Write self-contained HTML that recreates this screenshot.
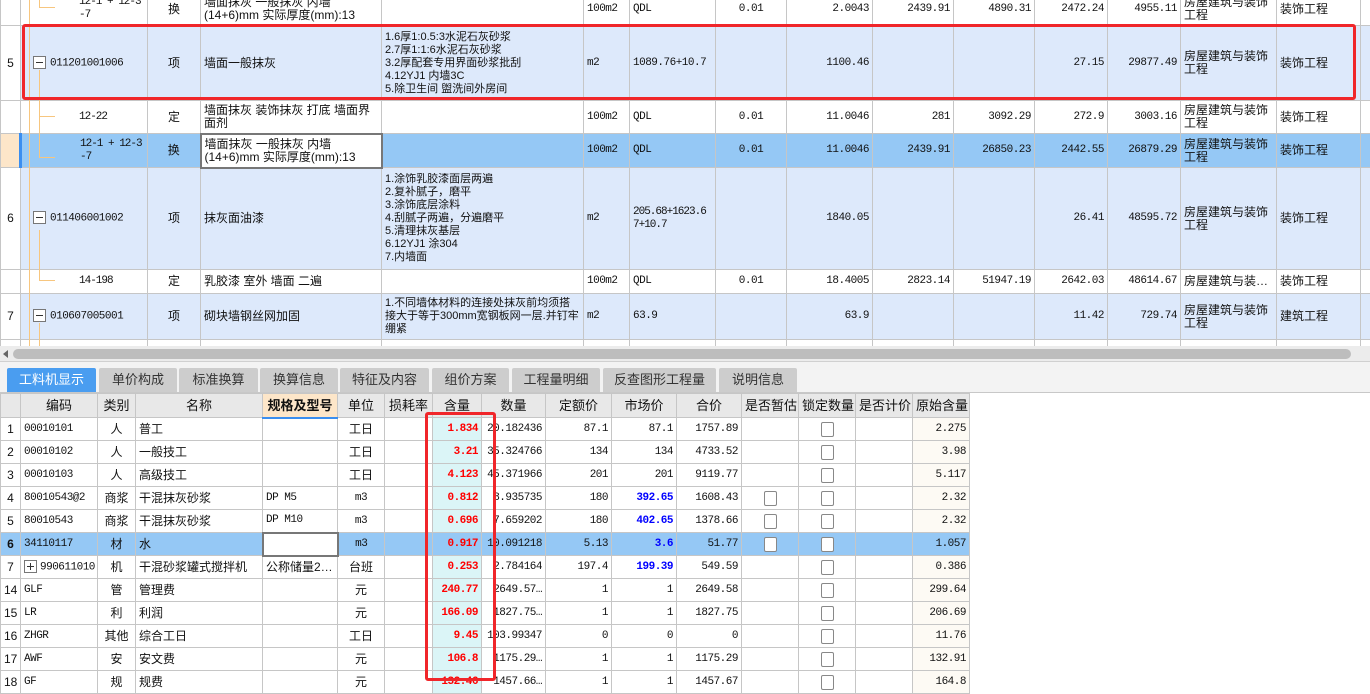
<!DOCTYPE html>
<html><head><meta charset="utf-8"><style>
*{margin:0;padding:0;box-sizing:border-box}
body{width:1370px;height:683px;overflow:hidden;background:#fff;font-family:"Liberation Sans","Noto Sans CJK SC",sans-serif;font-size:12px;color:#111;position:relative}
table{border-collapse:collapse;table-layout:fixed;position:absolute}
td{border:1px solid #c6c6c6;padding:0 3px;overflow:hidden;white-space:nowrap;line-height:13px;vertical-align:middle}
.w{white-space:normal;word-break:break-all}
.m{overflow:hidden;line-height:13px}
.r{text-align:right}.c{text-align:center}
.b{background:#dde9fb}.s{background:#95c8f5}
.num{font-family:"Liberation Mono","Noto Sans CJK SC",monospace;font-size:11px;letter-spacing:-0.5px}
.tc{font-family:"Liberation Mono",monospace;font-size:11px;letter-spacing:-1px;padding-left:58px!important}
.d{font-size:11px}
.tree{position:absolute;background:#f7c67f}
.box{display:inline-block;width:13px;height:13px;border:1px solid #777;background:#fff;vertical-align:middle;position:relative;margin-right:4px}
.box:after{content:"";position:absolute;left:2px;right:2px;top:5px;height:1px;background:#333}
.plus:before{content:"";position:absolute;top:2px;bottom:2px;left:5px;width:1px;background:#333}
.tab{position:absolute;top:368px;height:24px;background:#cdcdcd;color:#333;font-size:13px;text-align:center;line-height:24px;border-radius:2px 2px 0 0}
#bot td{height:23px}
#bot tr.h td{background:#e8e8e8;text-align:center;font-size:13px;height:24px}
.cy{background:#dbf5f7;color:#f00;font-weight:bold;text-align:right}
.og{background:#fdfaf4;text-align:right}
.blue{color:#00f;font-weight:bold}
.cb{display:inline-block;width:13px;height:15px;border:1px solid #888;border-radius:2px;background:#fff;vertical-align:middle}
</style></head><body>

<table id="top" style="left:0;top:-8px;width:1380px">
<colgroup><col style="width:20px"><col style="width:127px"><col style="width:53px"><col style="width:181px"><col style="width:202px"><col style="width:46px"><col style="width:86px"><col style="width:71px"><col style="width:86px"><col style="width:81px"><col style="width:81px"><col style="width:73px"><col style="width:73px"><col style="width:96px"><col style="width:84px"><col style="width:20px"></colgroup>
<tr style="height:33px"><td></td><td class="tc"><div class="m" style="max-height:31px">12-1 + 12-3 *<br>-7</div></td><td class="c">换</td><td><div class="m" style="max-height:31px">墙面抹灰 一般抹灰 内墙<br>(14+6)mm 实际厚度(mm):13</div></td><td></td><td class="num">100m2</td><td class="num">QDL</td><td class="c num">0.01</td><td class="r num">2.0043</td><td class="r num">2439.91</td><td class="r num">4890.31</td><td class="r num">2472.24</td><td class="r num">4955.11</td><td class="w"><div class="m" style="max-height:31px">房屋建筑与装饰工程</div></td><td>装饰工程</td><td></td></tr>
<tr style="height:75px" class="b"><td class="c" style="background:#fff">5</td><td style="padding-left:12px" class="num"><span class="box"></span>011201001006</td><td class="c">项</td><td>墙面一般抹灰</td><td class="d"><div class="m" style="max-height:73px">1.6厚1:0.5:3水泥石灰砂浆<br>2.7厚1:1:6水泥石灰砂浆<br>3.2厚配套专用界面砂浆批刮<br>4.12YJ1 内墙3C<br>5.除卫生间 盥洗间外房间</div></td><td class="num">m2</td><td class="num">1089.76+10.7</td><td></td><td class="r num">1100.46</td><td></td><td></td><td class="r num">27.15</td><td class="r num">29877.49</td><td class="w"><div class="m" style="max-height:31px">房屋建筑与装饰工程</div></td><td>装饰工程</td><td></td></tr>
<tr style="height:33px"><td></td><td class="tc">12-22</td><td class="c">定</td><td class="w"><div class="m" style="max-height:31px">墙面抹灰 装饰抹灰 打底 墙面界面剂</div></td><td></td><td class="num">100m2</td><td class="num">QDL</td><td class="c num">0.01</td><td class="r num">11.0046</td><td class="r num">281</td><td class="r num">3092.29</td><td class="r num">272.9</td><td class="r num">3003.16</td><td class="w"><div class="m" style="max-height:31px">房屋建筑与装饰工程</div></td><td>装饰工程</td><td></td></tr>
<tr style="height:34px" class="s"><td style="background:#fde6c9;border-right:3px solid #3a8ef0"></td><td class="tc"><div class="m" style="max-height:31px">12-1 + 12-3 *<br>-7</div></td><td class="c">换</td><td style="background:#fff;border:2px solid #777"><div class="m" style="max-height:29px">墙面抹灰 一般抹灰 内墙<br>(14+6)mm 实际厚度(mm):13</div></td><td></td><td class="num">100m2</td><td class="num">QDL</td><td class="c num">0.01</td><td class="r num">11.0046</td><td class="r num">2439.91</td><td class="r num">26850.23</td><td class="r num">2442.55</td><td class="r num">26879.29</td><td class="w"><div class="m" style="max-height:31px">房屋建筑与装饰工程</div></td><td>装饰工程</td><td></td></tr>
<tr style="height:102px" class="b"><td class="c" style="background:#fff">6</td><td style="padding-left:12px" class="num"><span class="box"></span>011406001002</td><td class="c">项</td><td>抹灰面油漆</td><td class="d"><div class="m" style="max-height:100px">1.涂饰乳胶漆面层两遍<br>2.复补腻子，磨平<br>3.涂饰底层涂料<br>4.刮腻子两遍，分遍磨平<br>5.清理抹灰基层<br>6.12YJ1 涂304<br>7.内墙面</div></td><td class="num">m2</td><td class="num" style="letter-spacing:-1px"><div class="m" style="max-height:30px">205.68+1623.6<br>7+10.7</div></td><td></td><td class="r num">1840.05</td><td></td><td></td><td class="r num">26.41</td><td class="r num">48595.72</td><td class="w"><div class="m" style="max-height:31px">房屋建筑与装饰工程</div></td><td>装饰工程</td><td></td></tr>
<tr style="height:24px"><td></td><td class="tc">14-198</td><td class="c">定</td><td>乳胶漆 室外 墙面 二遍</td><td></td><td class="num">100m2</td><td class="num">QDL</td><td class="c num">0.01</td><td class="r num">18.4005</td><td class="r num">2823.14</td><td class="r num">51947.19</td><td class="r num">2642.03</td><td class="r num">48614.67</td><td>房屋建筑与装…</td><td>装饰工程</td><td></td></tr>
<tr style="height:46px" class="b"><td class="c" style="background:#fff">7</td><td style="padding-left:12px" class="num"><span class="box"></span>010607005001</td><td class="c">项</td><td>砌块墙钢丝网加固</td><td class="w d"><div class="m" style="max-height:44px">1.不同墙体材料的连接处抹灰前均须搭接大于等于300mm宽钢板网一层.并钉牢绷紧</div></td><td class="num">m2</td><td class="num">63.9</td><td></td><td class="r num">63.9</td><td></td><td></td><td class="r num">11.42</td><td class="r num">729.74</td><td class="w"><div class="m" style="max-height:31px">房屋建筑与装饰工程</div></td><td>建筑工程</td><td></td></tr>
<tr style="height:20px"><td></td><td></td><td></td><td></td><td></td><td></td><td></td><td></td><td></td><td></td><td></td><td></td><td></td><td></td><td></td><td></td></tr>
</table>
<div class="tree" style="left:29px;top:0;width:1px;height:346px"></div>
<div class="tree" style="left:39px;top:0;width:1px;height:8px"></div>
<div class="tree" style="left:39px;top:7px;width:16px;height:1px"></div>
<div class="tree" style="left:39px;top:70px;width:1px;height:88px"></div>
<div class="tree" style="left:39px;top:116px;width:16px;height:1px"></div>
<div class="tree" style="left:39px;top:157px;width:16px;height:1px"></div>
<div class="tree" style="left:39px;top:230px;width:1px;height:51px"></div>
<div class="tree" style="left:39px;top:280px;width:16px;height:1px"></div>
<div class="tree" style="left:39px;top:323px;width:1px;height:23px"></div>
<div style="position:absolute;left:22px;top:24px;width:1334px;height:76px;border:3px solid #f0262a;border-radius:3px"></div>

<div style="position:absolute;left:0;top:346px;width:1370px;height:16px;background:#ececec;border-bottom:1px solid #d0d0d0"></div>
<div style="position:absolute;left:3px;top:350px;width:0;height:0;border-top:4px solid transparent;border-bottom:4px solid transparent;border-right:5px solid #666"></div>
<div style="position:absolute;left:13px;top:349px;width:1338px;height:10px;background:#bdbdbd;border-radius:5px"></div>
<div style="position:absolute;left:0;top:362px;width:1370px;height:31px;background:#f3f3f3;border-bottom:1px solid #c8c8c8"></div>

<div class="tab" style="left:7px;width:89px;background:#4a9df0;color:#fff">工料机显示</div>
<div class="tab" style="left:99px;width:78px">单价构成</div>
<div class="tab" style="left:179px;width:79px">标准换算</div>
<div class="tab" style="left:260px;width:78px">换算信息</div>
<div class="tab" style="left:340px;width:89px">特征及内容</div>
<div class="tab" style="left:432px;width:77px">组价方案</div>
<div class="tab" style="left:512px;width:88px">工程量明细</div>
<div class="tab" style="left:603px;width:113px">反查图形工程量</div>
<div class="tab" style="left:719px;width:78px">说明信息</div>

<table id="bot" style="left:0;top:393px;width:969px">
<colgroup><col style="width:20px"><col style="width:77px"><col style="width:38px"><col style="width:127px"><col style="width:75px"><col style="width:47px"><col style="width:48px"><col style="width:49px"><col style="width:64px"><col style="width:66px"><col style="width:65px"><col style="width:65px"><col style="width:57px"><col style="width:57px"><col style="width:57px"><col style="width:57px"></colgroup>
<tr class="h"><td></td><td>编码</td><td>类别</td><td>名称</td><td style="background:#fde6c9;font-weight:bold;border-bottom:2px solid #3a8ef0">规格及型号</td><td>单位</td><td>损耗率</td><td>含量</td><td>数量</td><td>定额价</td><td>市场价</td><td>合价</td><td>是否暂估</td><td>锁定数量</td><td>是否计价</td><td>原始含量</td></tr>
<tr><td class="c">1</td><td class="num">00010101</td><td class="c">人</td><td>普工</td><td></td><td class="c">工日</td><td></td><td class="cy num">1.834</td><td class="r num">20.182436</td><td class="r num">87.1</td><td class="r num">87.1</td><td class="r num">1757.89</td><td></td><td class="c"><span class="cb"></span></td><td></td><td class="og num">2.275</td></tr>
<tr><td class="c">2</td><td class="num">00010102</td><td class="c">人</td><td>一般技工</td><td></td><td class="c">工日</td><td></td><td class="cy num">3.21</td><td class="r num">35.324766</td><td class="r num">134</td><td class="r num">134</td><td class="r num">4733.52</td><td></td><td class="c"><span class="cb"></span></td><td></td><td class="og num">3.98</td></tr>
<tr><td class="c">3</td><td class="num">00010103</td><td class="c">人</td><td>高级技工</td><td></td><td class="c">工日</td><td></td><td class="cy num">4.123</td><td class="r num">45.371966</td><td class="r num">201</td><td class="r num">201</td><td class="r num">9119.77</td><td></td><td class="c"><span class="cb"></span></td><td></td><td class="og num">5.117</td></tr>
<tr><td class="c">4</td><td class="num">80010543@2</td><td class="c">商浆</td><td>干混抹灰砂浆</td><td class="num">DP M5</td><td class="c num">m3</td><td></td><td class="cy num">0.812</td><td class="r num">8.935735</td><td class="r num">180</td><td class="r num blue">392.65</td><td class="r num">1608.43</td><td class="c"><span class="cb"></span></td><td class="c"><span class="cb"></span></td><td></td><td class="og num">2.32</td></tr>
<tr><td class="c">5</td><td class="num">80010543</td><td class="c">商浆</td><td>干混抹灰砂浆</td><td class="num">DP M10</td><td class="c num">m3</td><td></td><td class="cy num">0.696</td><td class="r num">7.659202</td><td class="r num">180</td><td class="r num blue">402.65</td><td class="r num">1378.66</td><td class="c"><span class="cb"></span></td><td class="c"><span class="cb"></span></td><td></td><td class="og num">2.32</td></tr>
<tr class="s"><td class="c" style="font-weight:bold">6</td><td class="num">34110117</td><td class="c">材</td><td>水</td><td style="background:#fff;border:2px solid #777"></td><td class="c num">m3</td><td></td><td class="num" style="color:#f00;font-weight:bold;text-align:right">0.917</td><td class="r num">10.091218</td><td class="r num">5.13</td><td class="r num blue">3.6</td><td class="r num">51.77</td><td class="c"><span class="cb"></span></td><td class="c"><span class="cb"></span></td><td></td><td class="r num">1.057</td></tr>
<tr><td class="c">7</td><td class="num"><span class="box plus" style="margin-right:3px"></span>990611010</td><td class="c">机</td><td>干混砂浆罐式搅拌机</td><td>公称储量2…</td><td class="c">台班</td><td></td><td class="cy num">0.253</td><td class="r num">2.784164</td><td class="r num">197.4</td><td class="r num blue">199.39</td><td class="r num">549.59</td><td></td><td class="c"><span class="cb"></span></td><td></td><td class="og num">0.386</td></tr>
<tr><td class="c">14</td><td class="num">GLF</td><td class="c">管</td><td>管理费</td><td></td><td class="c">元</td><td></td><td class="cy num">240.77</td><td class="r num">2649.57…</td><td class="r num">1</td><td class="r num">1</td><td class="r num">2649.58</td><td></td><td class="c"><span class="cb"></span></td><td></td><td class="og num">299.64</td></tr>
<tr><td class="c">15</td><td class="num">LR</td><td class="c">利</td><td>利润</td><td></td><td class="c">元</td><td></td><td class="cy num">166.09</td><td class="r num">1827.75…</td><td class="r num">1</td><td class="r num">1</td><td class="r num">1827.75</td><td></td><td class="c"><span class="cb"></span></td><td></td><td class="og num">206.69</td></tr>
<tr><td class="c">16</td><td class="num">ZHGR</td><td class="c">其他</td><td>综合工日</td><td></td><td class="c">工日</td><td></td><td class="cy num">9.45</td><td class="r num">103.99347</td><td class="r num">0</td><td class="r num">0</td><td class="r num">0</td><td></td><td class="c"><span class="cb"></span></td><td></td><td class="og num">11.76</td></tr>
<tr><td class="c">17</td><td class="num">AWF</td><td class="c">安</td><td>安文费</td><td></td><td class="c">元</td><td></td><td class="cy num">106.8</td><td class="r num">1175.29…</td><td class="r num">1</td><td class="r num">1</td><td class="r num">1175.29</td><td></td><td class="c"><span class="cb"></span></td><td></td><td class="og num">132.91</td></tr>
<tr><td class="c">18</td><td class="num">GF</td><td class="c">规</td><td>规费</td><td></td><td class="c">元</td><td></td><td class="cy num">132.46</td><td class="r num">1457.66…</td><td class="r num">1</td><td class="r num">1</td><td class="r num">1457.67</td><td></td><td class="c"><span class="cb"></span></td><td></td><td class="og num">164.8</td></tr>
</table>
<div style="position:absolute;left:425px;top:412px;width:71px;height:269px;border:3px solid #f0262a;border-radius:3px"></div>
</body></html>
